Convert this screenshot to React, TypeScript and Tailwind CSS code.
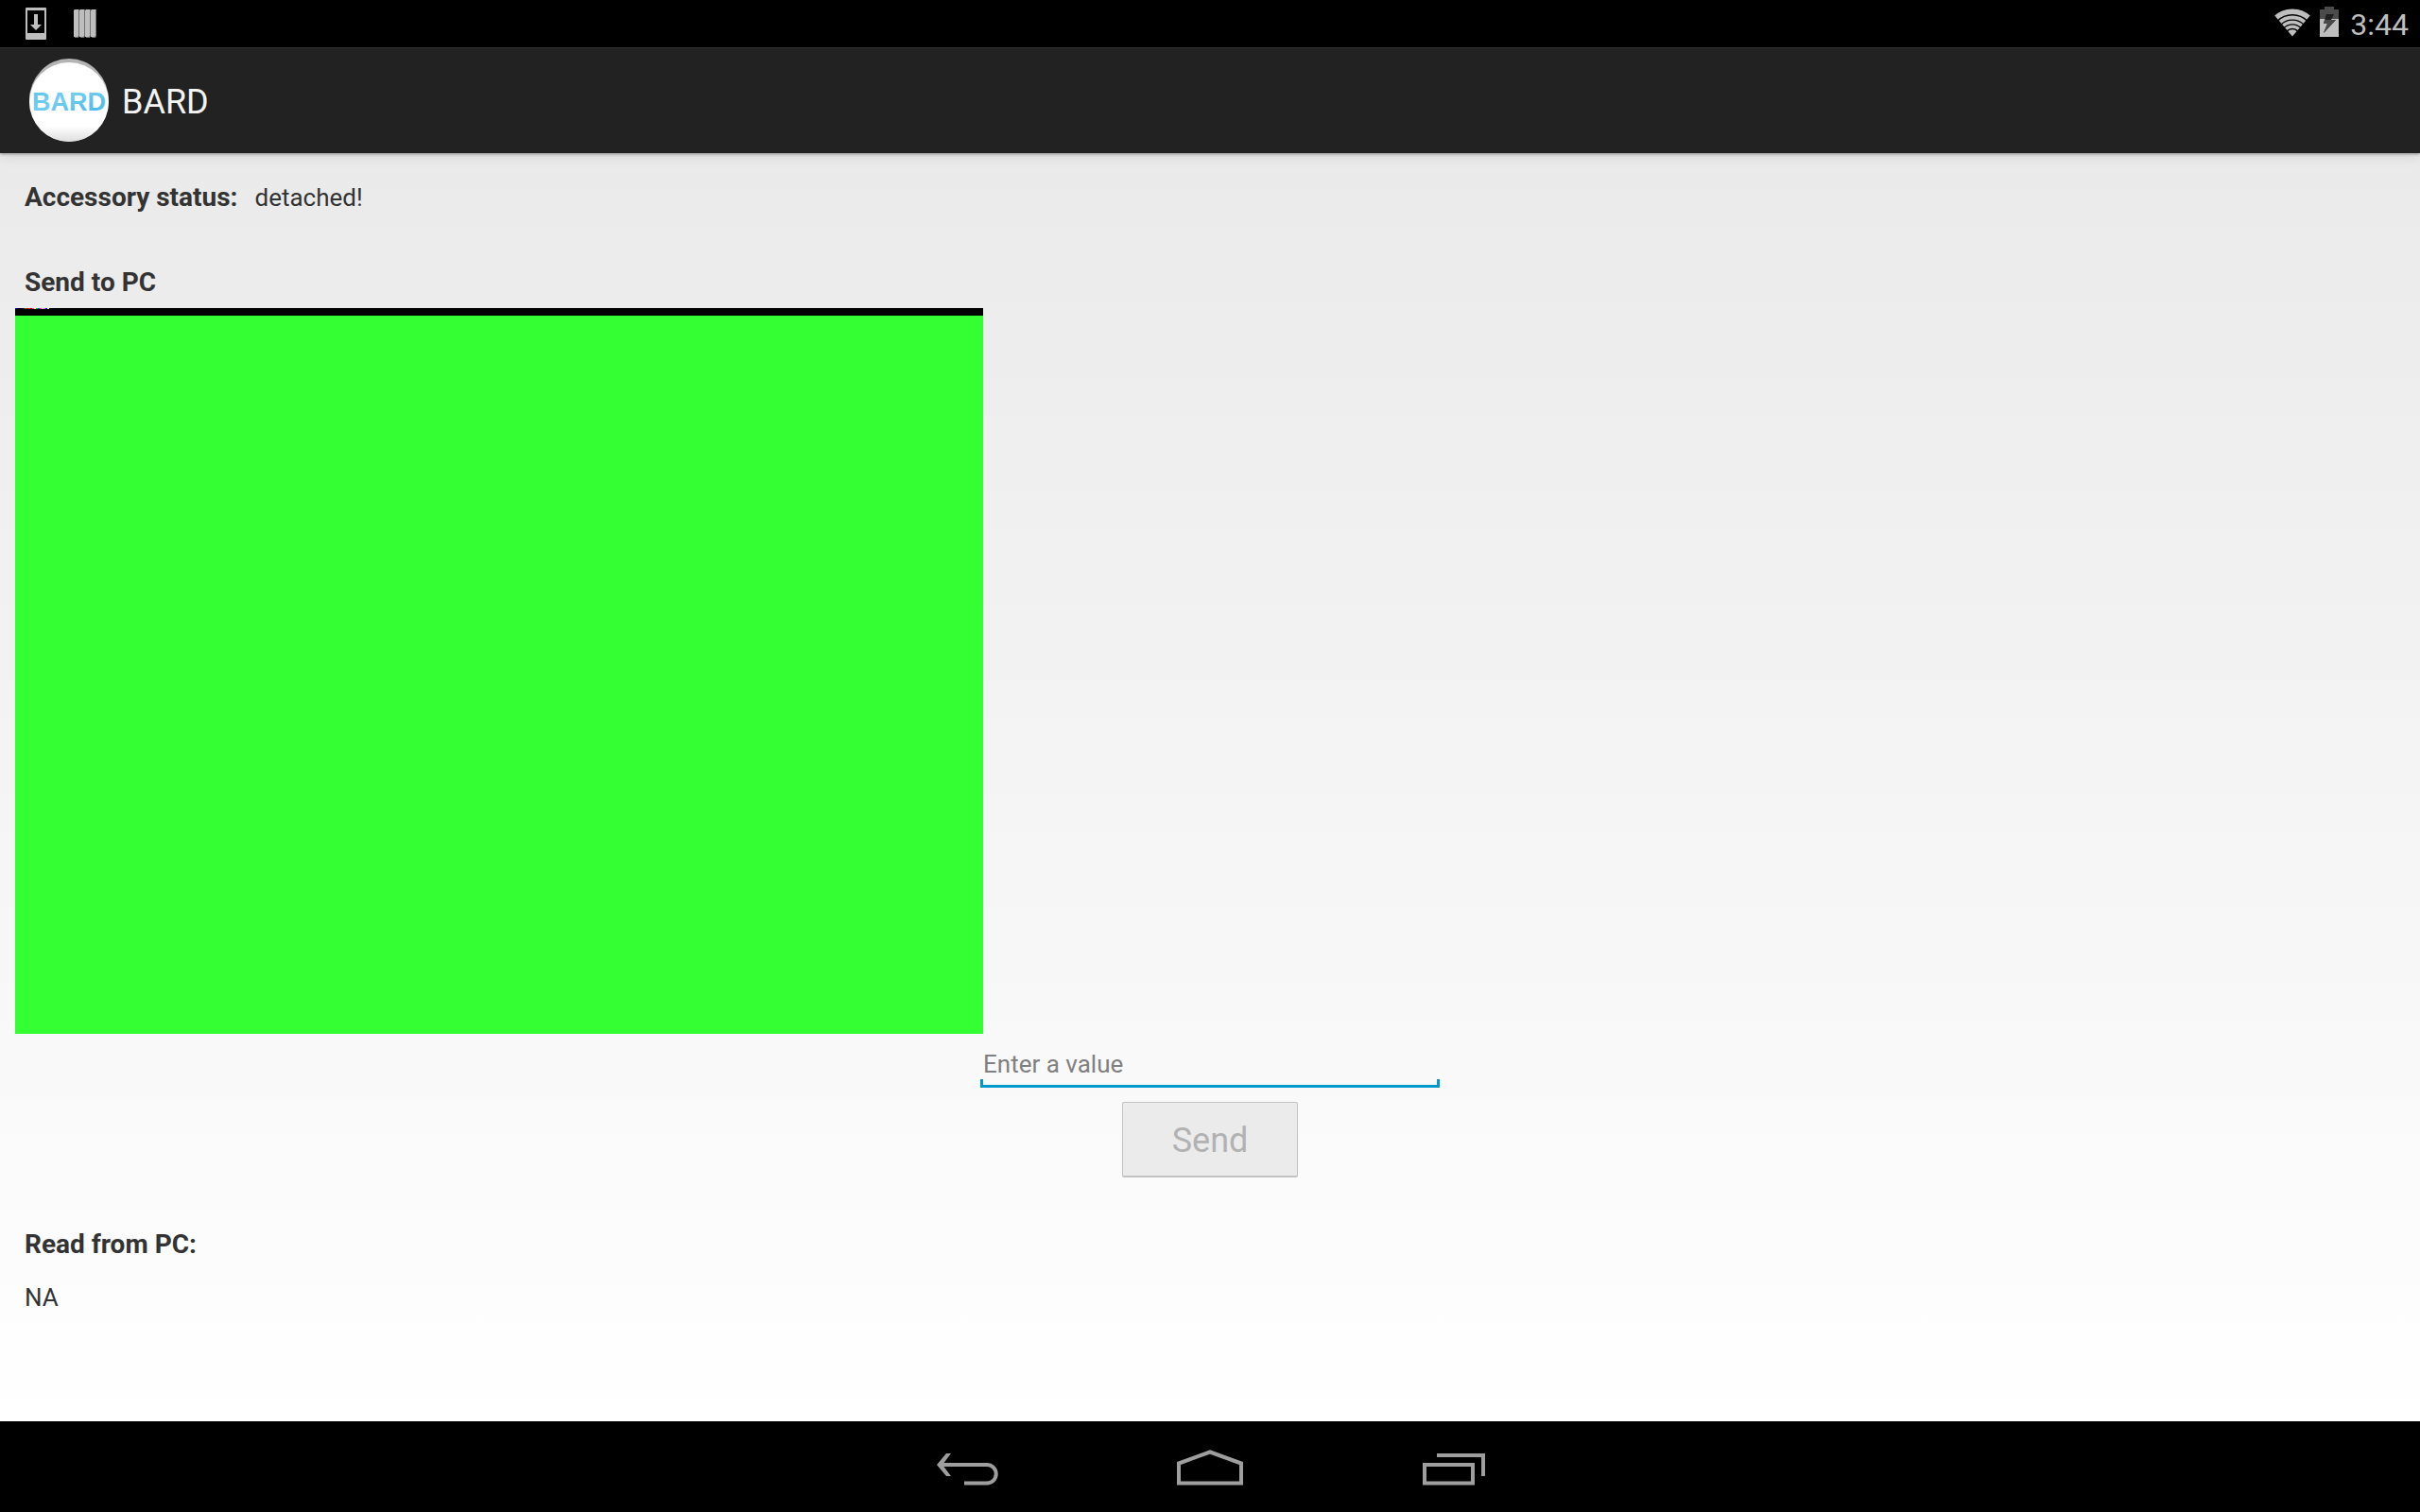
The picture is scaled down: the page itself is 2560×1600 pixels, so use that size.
import React from "react";

const NOISE = ["#0000d0", "#000030", "#000000", "#000060", "#202000", "#806000", "#802000", "#e02020", "#900030", "#ff4080", "#ffff80", "#00c080", "#0060a0", "#ff20c0", "#ffe0a0", "#ff60ff", "#0000ff", "#ffffff"];

function StatusBar() {
  return (
    <header className="flex h-[50px] items-center justify-between bg-black pl-[26px] pr-3">
      <div className="flex items-center gap-7">
        <svg width="24" height="34" viewBox="0 0 24 34" aria-label="Download">
          <path fill="#bebebe" fillRule="evenodd" d="M2 0h20a1 1 0 0 1 1 1v32a1 1 0 0 1-1 1H2a1 1 0 0 1-1-1V1a1 1 0 0 1 1-1zM3 3v24h18V3z" />
          <path fill="#bebebe" d="M10 7h4v11h4l-6 6-6-6h4z" />
        </svg>
        <svg width="24" height="30" viewBox="0 0 24 30" aria-label="Notification">
          {[0, 6, 12, 18].map((x) => (
            <g key={x}>
              <path fill="#707070" d={`M${x + 4} 0h2v28l-1 2h-4z`} />
              <path fill="#bebebe" d={`M${x} 1l1-1h4v28l-1 1h-4z`} />
            </g>
          ))}
        </svg>
      </div>
      <div className="flex items-center">
        <svg className="mb-1" width="40" height="32" viewBox="0 0 40 32" aria-label="Wi-Fi">
          <defs>
            <clipPath id="fan"><path d="M20 31.500L0 8V0h40v8z" /></clipPath>
          </defs>
          <g clipPath="url(#fan)" fill="none" stroke="#bebebe">
            <circle cx="20" cy="31.500" r="26.200" strokeWidth="5.600" />
            <circle cx="20" cy="31.500" r="20" strokeWidth="4" />
            <circle cx="20" cy="31.500" r="15" strokeWidth="3.400" />
            <circle cx="20" cy="31.500" r="10.400" strokeWidth="3.200" />
            <circle cx="20" cy="31.500" r="7.200" fill="#bebebe" stroke="none" />
          </g>
        </svg>
        <svg className="mb-1 ml-2" width="22" height="32" viewBox="0 0 22 32" aria-label="Battery charging">
          <path fill="#4b4b4b" d="M6 0h10v3h5v10H1V3h5z" />
          <path fill="#bebebe" d="M1 13h20v19H1z" />
          <path fill="#1f1f1f" d="M8 8h8l-3 6h5L5 28l4-10H5z" />
          <path fill="#484848" d="M13 14h5L5 28l4-10H5l1-4z" />
        </svg>
        <time className="ml-[11px] pt-[2px] text-[32px] leading-[48px] text-[#bebebe]">3:44</time>
      </div>
    </header>
  );
}

function ActionBar() {
  return (
    <div className="relative flex h-28 items-center gap-[14px] border-t border-[#303030] bg-[#222222] px-[31px] shadow-[0_1px_3px_rgba(0,0,0,0.4),0_4px_14px_rgba(0,0,0,0.08)]">
      <svg className="mb-[2px]" width="84" height="88" viewBox="0 0 84 88" aria-hidden="true">
        <defs>
          <linearGradient id="disc" x1="0" y1="0" x2="0" y2="1">
            <stop offset="0.8" stopColor="#ffffff" />
            <stop offset="1" stopColor="#dedede" />
          </linearGradient>
          <linearGradient id="letters" x1="0" y1="0" x2="1" y2="1">
            <stop offset="0" stopColor="#5bc4ee" />
            <stop offset="0.4" stopColor="#72cdf2" />
            <stop offset="1" stopColor="#3fb5e8" />
          </linearGradient>
        </defs>
        <ellipse cx="42" cy="44" rx="42" ry="44" fill="#b4b4b4" />
        <ellipse cx="42" cy="46" rx="42" ry="42" fill="url(#disc)" />
        <text x="42" y="55" textAnchor="middle" fontFamily="Liberation Sans, sans-serif" fontWeight="700" fontSize="27" fill="url(#letters)">BARD</text>
      </svg>
      <h1 className="pt-[2px] text-[36px] leading-[44px] text-[#f3f3f3]">BARD</h1>
    </div>
  );
}

function NavBar() {
  return (
    <nav className="flex h-24 items-center justify-center gap-[186px] bg-black">
      <button aria-label="Back">
        <svg width="72" height="48" viewBox="0 0 72 48" fill="none" stroke="#9e9e9e" strokeWidth="4">
          <path d="M11 22H58a9.500 9.500 0 0 1 0 19.500H34" />
          <path fill="#9e9e9e" stroke="none" d="M5 22L15 10h5L11 22l9 12h-5z" />
        </svg>
      </button>
      <button aria-label="Home">
        <svg width="72" height="48" viewBox="0 0 72 48" fill="none" stroke="#9e9e9e" strokeWidth="4">
          <path d="M3 41.500V20.500L36 8.500l33 12v21z" />
        </svg>
      </button>
      <button aria-label="Recent apps">
        <svg width="72" height="48" viewBox="0 0 72 48" fill="none" stroke="#9e9e9e" strokeWidth="4">
          <path d="M5 22h51v19.500H5zM18 12h49v22" />
        </svg>
      </button>
    </nav>
  );
}

export default function App() {
  return (
    <div className="flex min-h-screen flex-col bg-black font-[Roboto,sans-serif]">
      <StatusBar />
      <ActionBar />
      <main className="flex grow flex-col bg-linear-to-b from-[#eaeaea] to-white px-4 text-[26px] leading-9 text-[#333333]">
        <div className="flex items-baseline gap-[18px] px-[10px] pt-[29px]">
          <h2 className="text-[28px] leading-9 font-bold">Accessory status:</h2>
          <p>detached!</p>
        </div>
        <h2 className="mt-[54px] px-[10px] pb-[9px] text-[28px] leading-9 font-bold">Send to PC</h2>
        <div className="h-[768px] w-full max-w-[1024px] border-t-8 border-black bg-[#33ff33]">
          <svg className="-mt-2 block" width="36" height="1" viewBox="0 0 36 1" shapeRendering="crispEdges" aria-hidden="true">
            {NOISE.map((c, i) => (
              <rect key={i} x={i * 2} width="2" height="1" fill={c} />
            ))}
          </svg>
        </div>
        <form className="flex flex-col items-center pt-4" onSubmit={(e) => e.preventDefault()}>
          <div className="w-[486px]">
            <input
              aria-label="Enter a value"
              placeholder="Enter a value"
              className="block h-8 w-full bg-transparent px-[3px] leading-8 outline-none placeholder:text-[#808080] placeholder:opacity-100"
            />
            <div className="h-[9px] border-x-3 border-b-3 border-[#0099cc]" />
          </div>
          <button
            disabled
            className="mt-[15px] h-20 w-[186px] rounded-xs border border-b-2 border-[#c2c2c2] bg-[#ebebeb] pt-[3px] text-[36px] leading-[44px] text-[#b2b2b2]"
          >
            Send
          </button>
        </form>
        <h2 className="mt-[53px] px-[10px] text-[28px] leading-9 font-bold">Read from PC:</h2>
        <p className="mt-5 px-[10px]">NA</p>
      </main>
      <NavBar />
    </div>
  );
}
